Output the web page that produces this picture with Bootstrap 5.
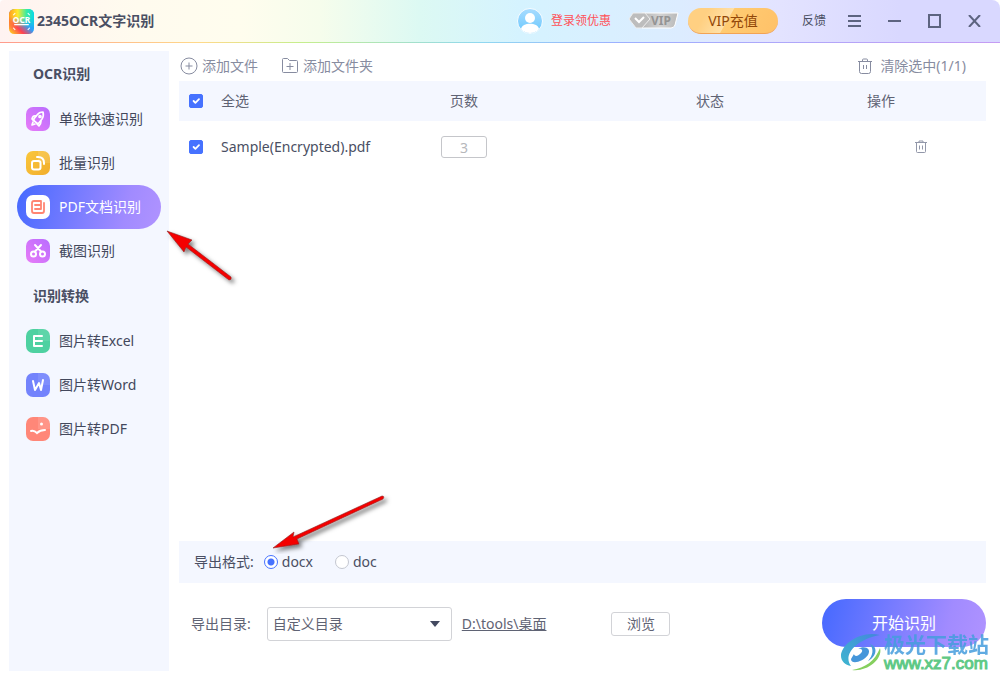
<!DOCTYPE html>
<html lang="zh-CN">
<head>
<meta charset="utf-8">
<meta name="viewport" content="width=device-width, initial-scale=1">
<title>2345OCR文字识别</title>
<link href="https://cdn.jsdelivr.net/npm/bootstrap@5.3.0/dist/css/bootstrap.min.css" rel="stylesheet">
<style>
  body { font: 14px/20px "Noto Sans", "Noto Sans CJK SC", sans-serif; color: #4a4f63; background: #fff; }
  button, select, input { font: inherit; color: inherit; }
  .plain { border: 0; background: none; padding: 0; color: inherit; }
  svg { display: block; flex: none; }
  .ln { fill: none; stroke: currentColor; }
  .titlebar { height: 43px; padding: 0 19px 0 9px; border-radius: 4px 8px 0 0;
    background: linear-gradient(90deg, #fff3f1 0, #fffbee 14%, #fffdee 24%, #f6fdec 32%, #dcf9f3 42%, #d5f3ff 52%, #dcecff 68%, #e3e3ff 78%, #d9d8ff 90%);
    border-bottom: 1px solid; border-image: linear-gradient(90deg, #ff9b8c, #ffd98a 20%, #c6ee8c 30%, #90d8f0 48%, #9db0ff 62%, #c59cf3) 1; }
  .app-name { font-size: 14px; line-height: 20px; padding-left: 3px; }
  .account { gap: 8px; }
  .small-text { font-size: 12px; }
  .login { color: #ff5058; text-decoration: none; }
  .vip-btn { width: 90px; height: 26px; border-radius: 13px; color: #924708; border: 0; border-bottom: 1px solid #f2a355;
    background: linear-gradient(120deg, #ffd082 0 20%, #ffe0a7 44%, #ffcb72 45%, #ffc168); }
  .winbtns { color: #5d6480; gap: 27px; padding-left: 22px; }
  .shell { padding: 8px 14px 9px 9px; gap: 10px; }
  .sidebar { width: 160px; background: #f4f7ff; padding: 0 8px; }
  .group-title { font-size: 14px; line-height: 46px; font-weight: 700; padding-left: 16px; margin: 0; }
  .side-link { height: 44px; padding-left: 9px; gap: 9px; border-radius: 22px; color: #43485c; text-decoration: none; }
  .side-link.current { color: #fff; background: linear-gradient(105deg, #4569ff, #a18bff 75%, #b093ff); }
  .tools { height: 30px; color: #878ca0; padding: 0 20px 0 1px; gap: 23px; }
  .files { table-layout: fixed; }
  .files th { height: 40px; font-weight: 400; padding: 0; background: #f4f7ff; color: #5f6374; }
  .files td { height: 52px; padding: 0; }
  .w-check { width: 42px; } .w-name { width: 220px; } .w-pages { width: 255px; } .w-state { width: 171px; }
  .pages { width: 46px; text-align: center; }
  input.pages { height: 22px; border: 1px solid #c5c6ca; border-radius: 3px; color: #b6b7bb; background: #fff; padding: 0; display: block; }
  .form-check-input { margin: 0; flex: none; width: 14px; height: 14px; border-color: #c4c7d0; }
  .form-check-input[type=checkbox] { border-radius: 2px; display: block; margin-left: 10px; }
  .form-check-input:checked { background-color: #4672ff; border-color: #4672ff; }
  .form-check-input[type=radio]:checked { border-color: #4672ff; background: radial-gradient(circle, #4672ff 3px, #fff 4px); }
  .format { height: 42px; background: #f4f7ff; padding-left: 15px; }
  .choice { gap: 4px; margin-left: 10px; }
  .choice + .choice { margin-left: 22px; }
  .output { padding: 17px 0 24px 12px; color: #5f6374; }
  .fields { gap: 10px; }
  .dir-select { width: 185px; height: 34px; margin-left: 6px; padding: 0 28px 0 5px; border: 1px solid #d2d3d7; border-radius: 3px;
    background: #fff url("data:image/svg+xml,%3Csvg xmlns='http://www.w3.org/2000/svg' viewBox='0 0 10 6'%3E%3Cpath fill='%23434960' d='M0 0h10L5 6z'/%3E%3C/svg%3E") no-repeat right 11px center / 10px 6px; appearance: none; }
  .browse { width: 59px; height: 24px; margin-left: 55px; border: 1px solid #d2d3d7; border-radius: 3px; background: #fff; padding: 0; }
  .start { width: 164px; height: 48px; margin-top: -1px; border: 0; border-radius: 24px; color: #fff; font-size: 16px; background: linear-gradient(105deg, #4569ff, #a18bff 75%, #b093ff); }
  .arrow-side { position: absolute; left: 164px; top: 227px; }
  .arrow-format { position: absolute; right: -140px; bottom: 18px; }
  .watermark { position: absolute; right: 11px; bottom: 7px; pointer-events: none; gap: 2px; }
  .wm-name { font: 700 21px/24px "Noto Sans CJK SC", sans-serif; color: #459ddd; opacity: .85; }
  .wm-url { font: 400 17px/18px "Liberation Sans", sans-serif; color: #5fc986; -webkit-text-stroke: 1px #5fc986; }
</style>
</head>
<body class="min-vh-100 d-flex flex-column position-relative">
<svg width="0" height="0" class="position-absolute" aria-hidden="true">
  <defs>
    <linearGradient id="rainbow" x1="0" y1="1" x2="1" y2="0"><stop offset=".08" stop-color="#ffbb28"/><stop offset=".3" stop-color="#ff4152"/><stop offset=".55" stop-color="#26a3ff"/><stop offset="1" stop-color="#08d6d2"/></linearGradient>
    <linearGradient id="warm" x1="0" y1="0" x2="1" y2="0"><stop stop-color="#ff9d1d"/><stop offset=".35" stop-color="#ffe92d"/><stop offset=".7" stop-color="#38eba3"/><stop offset="1" stop-color="#0bd8e7"/></linearGradient>
    <linearGradient id="fade" x1="0" y1="0" x2="0" y2="1"><stop offset=".3" stop-color="#fff"/><stop offset=".75" stop-color="#000"/></linearGradient>
    <mask id="topmask"><path d="M0 0h24v24H0z" fill="url(#fade)"/></mask>
    <linearGradient id="violet" x1="0" y1="1" x2="1" y2="0"><stop stop-color="#e87cf7"/><stop offset="1" stop-color="#b86cff"/></linearGradient>
    <linearGradient id="gold" x1="0" y1="0" x2="1" y2="1"><stop stop-color="#fac73c"/><stop offset="1" stop-color="#f1ad2c"/></linearGradient>
    <linearGradient id="avatarfill" x1="0" y1="0" x2="0" y2="1"><stop stop-color="#a9dcff"/><stop offset="1" stop-color="#69c8fd"/></linearGradient>
    <linearGradient id="silver"><stop stop-color="#b5b5b5"/><stop offset=".5" stop-color="#d3d3d3"/><stop offset="1" stop-color="#b9b9b9"/></linearGradient>
    <linearGradient id="swirl" x1="0" y1="1" x2="1" y2="0"><stop stop-color="#3eb7cf"/><stop offset="1" stop-color="#4386dc"/></linearGradient>
    <filter id="soft" x="-20%" y="-20%" width="150%" height="160%"><feDropShadow dx="3" dy="3" stdDeviation="2" flood-color="#000" flood-opacity=".5"/></filter>
  </defs>
</svg>

<header class="titlebar d-flex align-items-center">
  <svg width="25" height="25" viewBox="0 0 24 24" role="img" aria-label="OCR">
    <rect width="24" height="24" rx="5" fill="url(#rainbow)"/><rect width="24" height="24" rx="5" fill="url(#warm)" mask="url(#topmask)"/>
    <path d="M4 6l2-2M18 4l2 2M4 18l2 2M20 18l-2 2M5 15h14" fill="none" stroke="#fff" stroke-width="1"/>
    <text x="12" y="13" text-anchor="middle" font-family="Noto Sans" font-size="8" font-weight="700" fill="#fff">OCR</text>
  </svg>
  <h1 class="app-name m-0 fw-bold">2345OCR文字识别</h1>
  <div class="d-flex align-items-center ms-auto">
    <div class="account d-flex align-items-center">
      <svg width="26" height="26" viewBox="0 0 26 26" aria-hidden="true"><circle cx="13" cy="13" r="12.5" fill="url(#avatarfill)" stroke="#fff" stroke-opacity=".9"/><circle cx="13" cy="10" r="5" fill="#fff"/><path d="M4 21c1-7 17-7 18 0a12 12 0 0 1-18 0z" fill="#fff"/></svg>
      <a href="#" class="login small-text">登录领优惠</a>
    </div>
    <svg class="ms-3" width="53" height="20" viewBox="0 0 53 20" role="img" aria-label="VIP"><path d="M15 2h36l-3 12q-1 3-4 3H15z" fill="url(#silver)" stroke="#fff"/><path d="M6 2h12l5 6-8 9H9L2 8z" fill="#bdbdbd" stroke="#eee"/><path d="M8 7l4 4 5-5" fill="none" stroke="#fff" stroke-width="2"/><text x="24" y="14" font-family="Noto Sans" font-size="12" font-weight="700" fill="#949494">VIP</text></svg>
    <button type="button" class="vip-btn ms-2">VIP充值</button>
    <button type="button" class="plain small-text ms-4">反馈</button>
    <div class="winbtns d-flex align-items-center">
      <button type="button" class="plain" aria-label="菜单"><svg class="ln" width="13" height="12" stroke-width="2"><path d="M0 1h13M0 6h13M0 11h13"/></svg></button>
      <button type="button" class="plain" aria-label="最小化"><svg class="ln" width="13" height="12" stroke-width="2"><path d="M0 6h13"/></svg></button>
      <button type="button" class="plain" aria-label="最大化"><svg class="ln" width="13" height="14" stroke-width="2"><path d="M1 1h11v12H1z"/></svg></button>
      <button type="button" class="plain" aria-label="关闭"><svg class="ln" width="13" height="12" stroke-width="2"><path d="M1 0l11 12M12 0L1 12"/></svg></button>
    </div>
  </div>
</header>

<div class="shell d-flex flex-grow-1">
  <nav class="sidebar flex-shrink-0">
    <h2 class="group-title">OCR识别</h2>
    <a href="#" class="side-link d-flex align-items-center"><svg width="24" height="24" viewBox="0 0 24 24"><rect width="24" height="24" rx="7" fill="url(#violet)"/><g fill="none" stroke="#fff" stroke-width="1.7" stroke-linejoin="round" stroke-linecap="round"><path d="M17 5q-4 0-6 3l-4 5 5 4 4-5q2-3 1-7z"/><path d="M10 9q-3-1-4 3l2 1M15 14q0 3-2 5l-2-2M7 15l-1 3 3-1"/><circle cx="14" cy="9.500" r="1"/></g></svg>单张快速识别</a>
    <a href="#" class="side-link d-flex align-items-center"><svg width="24" height="24" viewBox="0 0 24 24"><rect width="24" height="24" rx="7" fill="url(#gold)"/><path d="M12 0h5q7 0 7 7v5H12z" fill="#fff" opacity=".12"/><g fill="none" stroke="#fff" stroke-width="2" stroke-linecap="round"><rect x="6" y="10" width="8.500" height="8.500" rx="2"/><path d="M11 6h1q6 0 6 6v1"/></g></svg>批量识别</a>
    <a href="#" class="side-link current d-flex align-items-center" aria-current="page"><svg width="24" height="24" viewBox="0 0 24 24"><rect width="24" height="24" rx="7" fill="#fff"/><g fill="none" stroke="#ff8572" stroke-width="1.800" stroke-linecap="round"><path d="M15 6H8Q6 6 6 8v8q0 2 2 2h8q2 0 2-2V8M15 6v8M9 10h5M9 14h6"/></g></svg>PDF文档识别</a>
    <a href="#" class="side-link d-flex align-items-center"><svg width="24" height="24" viewBox="0 0 24 24"><rect width="24" height="24" rx="7" fill="url(#violet)"/><g fill="none" stroke="#fff" stroke-width="2" stroke-linecap="round"><circle cx="7.500" cy="15" r="2.500"/><circle cx="16.500" cy="15" r="2.500"/><path d="M9 12.500l6-6.500M15 12.500L9 6"/></g></svg>截图识别</a>
    <h2 class="group-title">识别转换</h2>
    <a href="#" class="side-link d-flex align-items-center"><svg width="24" height="24" viewBox="0 0 24 24"><rect width="24" height="24" rx="7" fill="#4ed1a1"/><path d="M12 0h5q7 0 7 7v5H12z" fill="#fff" opacity=".09"/><path d="M16 7H8v10h8M8 12h8" fill="none" stroke="#fff" stroke-width="2" stroke-linecap="round" stroke-linejoin="round"/></svg>图片转Excel</a>
    <a href="#" class="side-link d-flex align-items-center"><svg width="24" height="24" viewBox="0 0 24 24"><rect width="24" height="24" rx="7" fill="#7383fc"/><path d="M12 0h5q7 0 7 7v5H12z" fill="#fff" opacity=".09"/><path d="M7 8l2 9 4-7 2 7 2-10" fill="none" stroke="#fff" stroke-width="2" stroke-linecap="round" stroke-linejoin="round"/></svg>图片转Word</a>
    <a href="#" class="side-link d-flex align-items-center"><svg width="24" height="24" viewBox="0 0 24 24"><rect width="24" height="24" rx="7" fill="#ff8778"/><path d="M12 0h5q7 0 7 7v5H12z" fill="#fff" opacity=".12"/><path d="M5 14q3-1 6 2 3-3 8-3" fill="none" stroke="#fff" stroke-width="2" stroke-linecap="round"/><circle cx="15.500" cy="7" r="1.500" fill="#fff"/></svg>图片转PDF</a>
  </nav>

  <main class="flex-grow-1 d-flex flex-column">
    <div class="tools d-flex align-items-center">
      <button type="button" class="plain d-flex align-items-center gap-1"><svg class="ln" width="18" height="18"><circle cx="9" cy="9" r="8"/><path d="M9 5.500v7M5.500 9h7"/></svg>添加文件</button>
      <button type="button" class="plain d-flex align-items-center gap-1"><svg class="ln" width="18" height="18" stroke-linejoin="round"><path d="M1.500 2.500q0-1 1-1h4l2 2h7q1 0 1 1v10q0 1-1 1h-13q-1 0-1-1zM9 6v7M5.500 9.500h7"/></svg>添加文件夹</button>
      <button type="button" class="plain d-flex align-items-center gap-2 ms-auto"><svg class="ln" width="14" height="17"><path d="M0 3.500h14M4.500 3V2q0-1 1-1h3q1 0 1 1v1M1.500 3.500v10q0 2 2 2h7q2 0 2-2v-10M5.500 7v4M8.500 7v4"/></svg>清除选中(1/1)</button>
    </div>
    <table class="files w-100">
      <thead><tr>
        <th class="w-check"><input type="checkbox" class="form-check-input" id="all" checked></th>
        <th class="w-name"><label for="all">全选</label></th>
        <th class="w-pages"><div class="pages">页数</div></th>
        <th class="w-state">状态</th>
        <th>操作</th>
      </tr></thead>
      <tbody><tr>
        <td><input type="checkbox" class="form-check-input" id="f1" checked></td>
        <td><label for="f1">Sample(Encrypted).pdf</label></td>
        <td><input type="text" class="pages" value="3" aria-label="页数"></td>
        <td></td>
        <td><button type="button" class="plain ms-5 d-block" aria-label="删除"><svg class="ln" width="12" height="14"><path d="M0 2.500h12M4 2V1h4v1M1.500 2.500v9q0 1 1 1h7q1 0 1-1v-9M4.500 5.500v4M7.500 5.500v4" stroke="#9297a9"/></svg></button></td>
      </tr></tbody>
    </table>
    <div class="flex-grow-1"></div>
    <div class="format d-flex align-items-center">
      <div class="position-relative">导出格式:
        <svg class="arrow-format" width="130" height="68" viewBox="0 0 130 68" aria-hidden="true"><path d="M9 62L30 46 29 51 118 10Q121 10 119 13L33 53 35 58z" fill="#f40000" stroke="#8b2323" stroke-width=".6" filter="url(#soft)"/></svg>
      </div>
      <div class="choice d-flex align-items-center"><input type="radio" name="fmt" id="docx" class="form-check-input" checked><label for="docx">docx</label></div>
      <div class="choice d-flex align-items-center"><input type="radio" name="fmt" id="doc" class="form-check-input"><label for="doc">doc</label></div>
    </div>
    <div class="output d-flex">
      <div class="fields d-flex align-items-center flex-grow-1">
        <label for="dir">导出目录:</label>
        <select id="dir" class="dir-select"><option>自定义目录</option></select>
        <a href="#" class="text-reset">D:\tools\桌面</a>
        <button type="button" class="browse">浏览</button>
      </div>
      <button type="button" class="start">开始识别</button>
    </div>
  </main>
</div>

<svg class="arrow-side" width="76" height="64" viewBox="0 0 76 64" aria-hidden="true"><path d="M3 4L28 13 24 17 67 50Q68 53 65 53L22 20 20 25z" fill="#f40000" stroke="#8b2323" stroke-width=".6" filter="url(#soft)"/></svg>
<div class="watermark d-flex align-items-center">
  <svg width="42" height="40" viewBox="0 0 42 40" aria-hidden="true"><path d="M40 3C21-2 1 12 1 24c0 5 4 9 10 10C3 24 14 8 40 3z" fill="url(#swirl)"/><path d="M11 27c0 6 12 3 17-4 4-7-4-10-10-6 4-1 6 2 2 5-3 3-6 2-6 0z" fill="#4596da"/><path d="M40 16c3 10-11 24-28 22 13-2 23-9 28-22z" fill="#85cf5e"/><path d="M30 12c9 3 6 13-2 17 5-6 6-11 2-17z" fill="#489ad8"/></svg>
  <div><div class="wm-name">极光下载站</div><div class="wm-url">www.xz7.com</div></div>
</div>
<script src="https://cdn.jsdelivr.net/npm/bootstrap@5.3.0/dist/js/bootstrap.bundle.min.js"></script>
</body>
</html>
